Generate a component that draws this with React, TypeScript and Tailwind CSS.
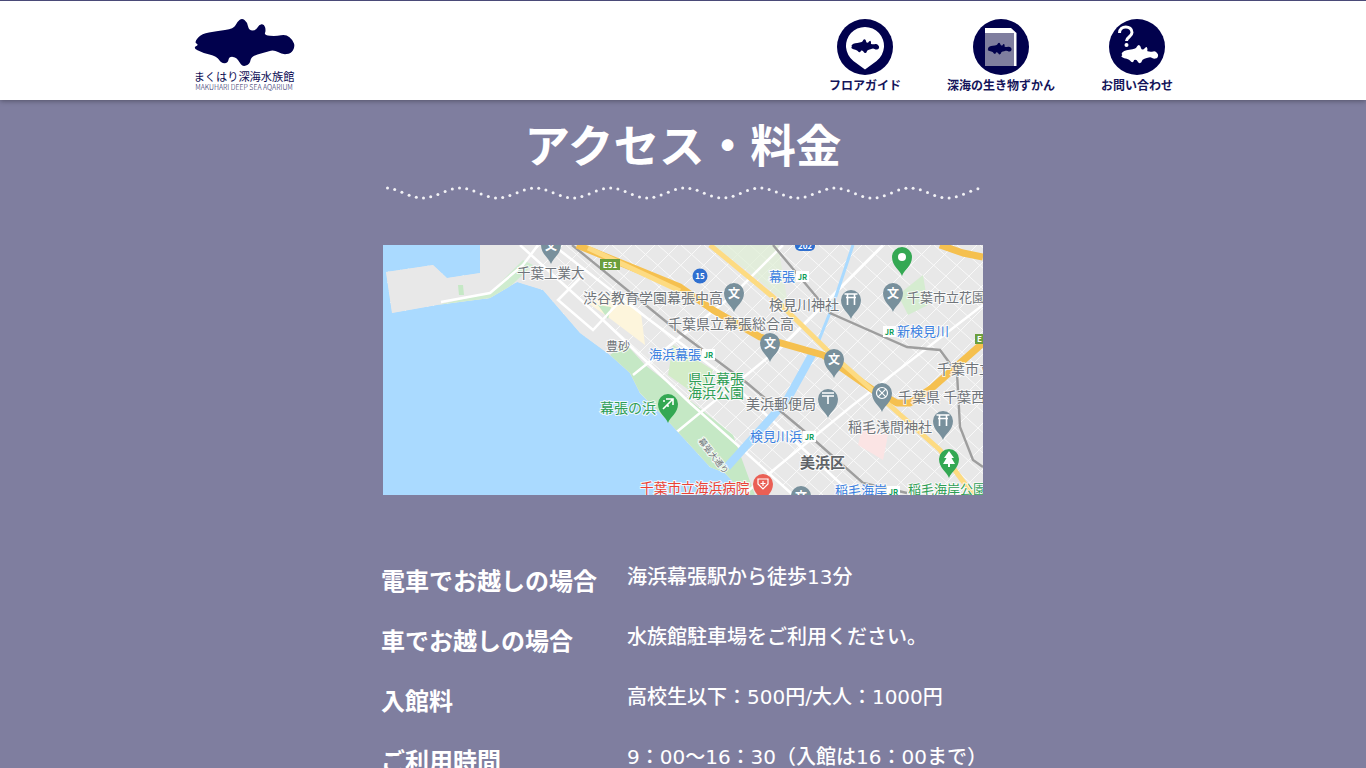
import React from "react";

type Pt = [number, number];

// closed smooth outline through midpoints
const smooth = (pts: Pt[]) => {
  const mid = (a: Pt, b: Pt): Pt => [(a[0] + b[0]) / 2, (a[1] + b[1]) / 2];
  const start = mid(pts[pts.length - 1], pts[0]);
  let d = `M${start[0]} ${start[1]}`;
  pts.forEach((p, i) => {
    const m = mid(p, pts[(i + 1) % pts.length]);
    d += ` Q${p[0]} ${p[1]} ${m[0]} ${m[1]}`;
  });
  return d + "Z";
};

const fish: Pt[] = [
  [0, 27], [8, 18], [22, 16], [40, 13], [43, 6], [48, 2], [53, 6], [55, 15], [62, 15], [65, 9], [70, 8], [72, 15], [70, 20],
  [82, 21], [92, 19], [99, 25], [101, 32], [97, 39], [88, 40], [80, 35], [70, 38], [57, 42], [56, 50], [48, 53], [43, 43],
  [35, 42], [34, 49], [27, 49], [23, 42], [8, 38], [-1, 33], [5, 30],
];
const fishPath = smooth(fish);

const NAVY = "#01014d";
const BG = "#7f7e9f";

const Logo = () => (
  <div className="flex w-[102px] flex-col items-center ml-[32px] pt-[16px]">
    <svg viewBox="-1 1 102 53" preserveAspectRatio="none" className="h-[51px] w-[102px]">
      <path d={fishPath} fill={NAVY} />
    </svg>
    <span className="mt-[1px] whitespace-nowrap text-[11.2px] leading-[14px] text-[#0d0d55]">まくはり深海水族館</span>
    <span className="whitespace-nowrap text-[7px] font-light leading-[8px] text-[#22225f]">MAKUHARI DEEP SEA AQARIUM</span>
  </div>
);

const FloorIcon = () => (
  <svg viewBox="0 0 56 56" className="h-14 w-14">
    <circle cx="28" cy="28" r="28" fill={NAVY} />
    <path d="M28 50.5 L16.4 42 A19 19 0 1 1 39.6 42 Z" fill="#fff" />
    <g transform="translate(14 19.5) scale(.28)">
      <path d={fishPath} fill={NAVY} />
    </g>
  </svg>
);

const BookIcon = () => (
  <svg viewBox="0 0 56 56" className="h-14 w-14">
    <circle cx="28" cy="28" r="28" fill={NAVY} />
    <path d="M12 9 H38 L43.5 14 V47 H12 Z" fill="#fff" />
    <rect x="12" y="14" width="29" height="33" fill={BG} />
    <g transform="translate(14.5 23) scale(.24)">
      <path d={fishPath} fill={NAVY} />
    </g>
  </svg>
);

const ContactIcon = () => (
  <svg viewBox="0 0 56 56" className="h-14 w-14">
    <circle cx="28" cy="28" r="28" fill={NAVY} />
    <path d="M10.5 14 C10.5 6 23 6 23 13.5 C23 18 17.5 18 17.5 22" fill="none" stroke="#fff" strokeWidth="3" />
    <circle cx="17.5" cy="26" r="2" fill="#fff" />
    <g transform="translate(12 25) scale(.37)">
      <path d={fishPath} fill="#fff" />
    </g>
  </svg>
);

const NavItem = ({ icon, label }: { icon: React.ReactNode; label: string }) => (
  <a className="flex w-[136px] flex-col items-center pt-[18px]">
    {icon}
    <span className="mt-[1px] whitespace-nowrap text-[12px] font-bold leading-[18px] text-[#14145a]">{label}</span>
  </a>
);

const Header = () => (
  <header className="relative z-10 h-[100px] border-t border-[#4a4a78] bg-white shadow-[0_1px_5px_rgba(0,0,0,0.35)]">
    <div className="mx-auto flex h-full w-[1044px] justify-between">
      <Logo />
      <nav className="flex">
        <NavItem icon={<FloorIcon />} label="フロアガイド" />
        <NavItem icon={<BookIcon />} label="深海の生き物ずかん" />
        <NavItem icon={<ContactIcon />} label="お問い合わせ" />
      </nav>
    </div>
  </header>
);

const Wave = () => {
  const dots: Pt[] = [];
  for (let x = 4.5; x <= 598; x += 7.2) {
    dots.push([x, 7 - 5 * Math.cos(((x - 77) / 75) * Math.PI * 2)]);
  }
  return (
    <svg viewBox="0 0 600 14" className="block h-[14px] w-[600px]">
      {dots.map(([x, y], i) => (
        <circle key={i} cx={x} cy={y} r="1.5" fill="#fff" opacity=".9" />
      ))}
    </svg>
  );
};

const LAND: Pt[] = [
  [97, 0], [97, 28], [64, 33], [50, 20], [3, 27], [9, 68], [54, 60], [107, 53], [134, 37], [160, 45], [197, 88], [227, 110],
  [247, 128], [257, 148], [284, 175], [327, 222], [342, 228], [362, 250], [600, 250], [600, 0],
];
// area towards the shore and the pier: big plots, no street grid
const SHORE: Pt[] = [
  [97, 0], [97, 28], [64, 33], [50, 20], [3, 27], [9, 68], [54, 60], [107, 53], [134, 37], [160, 45], [197, 88], [227, 110],
  [247, 128], [257, 148], [284, 175], [327, 222], [342, 228], [362, 250], [410, 250], [307, 158], [220, 75], [137, 0],
];
const line = (pts: Pt[]) => pts.map((p) => p.join(",")).join(" ");

const GREY_PIN = "#78909c";

const Pin = ({ x, y, color = GREY_PIN, glyph }: { x: number; y: number; color?: string; glyph?: React.ReactNode }) => (
  <g transform={`translate(${x} ${y})`}>
    <path d="M0 0 C-2 -6 -10 -10 -10 -19 A10 10 0 1 1 10 -19 C10 -10 2 -6 0 0Z" fill={color} />
    {glyph}
  </g>
);

const Bun = (
  <text x="0" y="-14.5" textAnchor="middle" fontSize="12" fontWeight="700" fill="#fff">
    文
  </text>
);
const Torii = (
  <path d="M-6.5 -25 H6.5 M-5 -21.5 H5 M-3.5 -25 V-14 M3.5 -25 V-14" stroke="#fff" strokeWidth="1.6" fill="none" />
);
const Post = <path d="M-6 -25 H6 M-6 -22 H6 M0 -22 V-14" stroke="#fff" strokeWidth="1.6" fill="none" />;

const Label = ({
  x,
  y,
  t,
  color = "#70757a",
  size = 14,
  weight = 400,
}: {
  x: number;
  y: number;
  t: string;
  color?: string;
  size?: number;
  weight?: number;
}) => (
  <text x={x} y={y} fill={color} fontSize={size} fontWeight={weight} stroke="#fff" strokeOpacity=".8" strokeWidth="2" paintOrder="stroke">
    {t}
  </text>
);

const Jr = ({ x, y }: { x: number; y: number }) => (
  <g transform={`translate(${x} ${y})`}>
    <rect width="13" height="11" fill="#fff" />
    <text x="6.5" y="8.5" textAnchor="middle" fontSize="7.5" fontWeight="700" fill="#0f9d58">
      JR
    </text>
  </g>
);

const Map = () => {
  const streets: React.ReactNode[] = [];
  for (let i = -300; i < 700; i += 23) {
    streets.push(<line key={`a${i}`} x1={i} y1={0} x2={i + 280} y2={250} />);
    streets.push(<line key={`b${i}`} x1={i + 250} y1={0} x2={i} y2={250} />);
  }
  return (
    <svg viewBox="0 0 600 250" className="block h-[250px] w-[600px]">
      <defs>
        <clipPath id="land">
          <polygon points={line(LAND)} />
        </clipPath>
      </defs>
      <rect width="600" height="250" fill="#aadaff" />
      <polygon points={line(LAND)} fill="#e8e8e8" />
      <g clipPath="url(#land)">
        <g stroke="#fff" strokeWidth="1" opacity=".75">{streets}</g>
        <polygon points={line(SHORE)} fill="#e8e8e8" />
        {/* parks and built-up patches */}
        <polygon points={line([[227, 110], [242, 98], [262, 120], [300, 150], [350, 190], [372, 250], [340, 250], [280, 180], [250, 140]])} fill="#c5e8c5" />
        <polygon points={line([[290, 100], [330, 125], [320, 155], [285, 130]])} fill="#d3ecc8" />
        <polygon points={line([[54, 60], [107, 48], [140, 15], [150, 20], [115, 53]])} fill="#cfeccf" />
        <polygon points={line([[75, 40], [80, 40], [81, 50], [76, 50]])} fill="#c5e8c5" />
        <polygon points={line([[205, 58], [225, 72], [262, 100], [258, 68], [232, 48]])} fill="#fdf5dc" />
        <polygon points={line([[215, 60], [228, 62], [225, 74]])} fill="#c5e8c5" />
        <polygon points={line([[330, 0], [395, 0], [405, 60], [370, 30]])} fill="#dff0d6" opacity=".7" />
        <polygon points={line([[480, 180], [505, 190], [500, 215], [475, 200]])} fill="#fbe4e4" />
        <polygon points={line([[515, 50], [540, 30], [545, 60], [525, 70]])} fill="#d5ecd0" />
        {/* main roads */}
        <g fill="none" stroke="#fff" strokeWidth="2.5">
          <polyline points={line([[137, 0], [220, 75], [307, 158], [360, 205], [410, 250]])} />
          <polyline points={line([[170, 0], [260, 70], [340, 130], [470, 250]])} />
          <polyline points={line([[58, 57], [107, 48], [140, 20], [155, 0]])} />
          <polyline points={line([[200, 30], [175, 55], [210, 85], [238, 55]])} />
          <polyline points={line([[250, 130], [350, 50], [400, 0]])} />
          <polyline points={line([[290, 190], [400, 100], [470, 30], [500, 0]])} />
          <polyline points={line([[360, 250], [470, 160], [600, 60]])} />
        </g>
        {/* river */}
        <polyline points={line([[470, 0], [450, 60], [436, 95]])} fill="none" stroke="#aadaff" strokeWidth="3" />
        <polyline points={line([[430, 108], [404, 155], [344, 222]])} fill="none" stroke="#aadaff" strokeWidth="8" />
        {/* rail */}
        <g fill="none" stroke="#9e9e9e" strokeWidth="2.4">
          <polyline points={line([[189, 0], [297, 88], [364, 138], [420, 185], [480, 238], [524, 248]])} />
          <polyline points={line([[390, 0], [447, 68], [524, 102], [557, 105], [574, 128], [577, 182], [590, 215], [600, 222]])} />
        </g>
        {/* highways */}
        <g fill="none" stroke="#f5c04f" strokeWidth="7" strokeLinejoin="round">
          <polyline points={line([[194, 0], [297, 42], [330, 65], [377, 92], [440, 110], [490, 145], [514, 158], [527, 158], [550, 142], [600, 98]])} />
          <polyline points={line([[557, 0], [580, 8], [600, 12]])} />
        </g>
        <g fill="none" stroke="#fddb82" strokeWidth="5" strokeLinejoin="round">
          <polyline points={line([[327, 0], [390, 52], [444, 105], [504, 158], [557, 205], [590, 250]])} />
          <polyline points={line([[205, 3], [297, 46]])} />
        </g>
      </g>
      <g fontFamily="'Noto Sans CJK JP', sans-serif">
        <Label x={134} y={33} t="千葉工業大" size={13.5} />
        <Label x={200} y={58} t="渋谷教育学園幕張中高" />
        <Label x={285} y={84} t="千葉県立幕張総合高" />
        <Label x={223} y={106} t="豊砂" size={12} />
        <Label x={266} y={114} t="海浜幕張" size={13} color="#3a7fe0" />
        <Label x={386} y={36} t="幕張" size={13} color="#3a7fe0" />
        <Label x={386} y={65} t="検見川神社" />
        <Label x={524} y={57} t="千葉市立花園" size={13} />
        <Label x={514} y={91} t="新検見川" size={13} color="#3a7fe0" />
        <Label x={554} y={129} t="千葉市立" />
        <Label x={515} y={157} t="千葉県 千葉西" size={14} />
        <Label x={305} y={139} t="県立幕張" color="#2f9e55" />
        <Label x={305} y={153} t="海浜公園" color="#2f9e55" />
        <Label x={363} y={164} t="美浜郵便局" />
        <Label x={217} y={168} t="幕張の浜" color="#2f9e55" />
        <Label x={367} y={196} t="検見川浜" size={13} color="#3a7fe0" />
        <Label x={465} y={187} t="稲毛浅間神社" />
        <Label x={417} y={223} t="美浜区" size={15} weight={700} color="#5f6368" />
        <Label x={257} y={248} t="千葉市立海浜病院" size={13.7} color="#ea4335" />
        <Label x={452} y={250} t="稲毛海岸" size={13} color="#3a7fe0" />
        <Label x={525} y={249} t="稲毛海岸公園" size={13} color="#2f9e55" />
        <g transform="translate(315 196) rotate(52)">
          <Label x={0} y={0} t="幕張大通り" size={8.5} />
        </g>
        <Jr x={319} y={104} />
        <Jr x={413} y={26} />
        <Jr x={500} y={81} />
        <Jr x={420} y={186} />
        <Jr x={504} y={241} />
        {/* road shields */}
        <rect x="217" y="14" width="20" height="11" fill="#6b9e3d" />
        <text x="227" y="23" textAnchor="middle" fontSize="8" fontWeight="700" fill="#fff">E51</text>
        <rect x="592" y="89" width="10" height="10" fill="#6b9e3d" />
        <text x="594" y="97" fontSize="8" fontWeight="700" fill="#fff">E</text>
        <circle cx="317" cy="31" r="7.5" fill="#2f6fd0" />
        <text x="317" y="34" textAnchor="middle" fontSize="8" fontWeight="700" fill="#fff">15</text>
        <rect x="412" y="-5" width="20" height="11" rx="5" fill="#2f6fd0" />
        <text x="422" y="4" textAnchor="middle" fontSize="8" fontWeight="700" fill="#fff">202</text>
        <Pin x={168} y={19} glyph={Bun} />
        <Pin x={351} y={67} glyph={Bun} />
        <Pin x={468} y={74} glyph={Torii} />
        <Pin x={510} y={67} glyph={Bun} />
        <Pin x={387} y={117} glyph={Bun} />
        <Pin x={451} y={133} glyph={Bun} />
        <Pin
          x={499}
          y={167}
          glyph={
            <g fill="none" stroke="#fff" strokeWidth="1.2">
              <circle cy="-19" r="5.5" />
              <path d="M-3.8 -22.8 L3.8 -15.2 M3.8 -22.8 L-3.8 -15.2" />
            </g>
          }
        />
        <Pin x={445} y={173} glyph={Post} />
        <Pin x={560} y={195} glyph={Torii} />
        <Pin x={519} y={31} color="#34a853" glyph={<circle cy="-19" r="4" fill="#fff" />} />
        <Pin
          x={285}
          y={178}
          color="#34a853"
          glyph={<path d="M-5 -14 L5 -24 M-2 -24 L5 -24 L5 -18 M-5 -22 h2 M-1 -17 h2" stroke="#fff" strokeWidth="1.6" fill="none" />}
        />
        <Pin x={566} y={233} color="#34a853" glyph={<path d="M0 -27 L5 -20 H2.5 L6 -14 H1 V-11 H-1 V-14 H-6 L-2.5 -20 H-5 Z" fill="#fff" />} />
        <Pin x={380} y={258} color="#ea5f55" glyph={<path d="M-5 -24 H5 V-19 L0 -14 L-5 -19 Z M0 -22 V-17 M-2.5 -19.5 H2.5" stroke="#fff" strokeWidth="1.2" fill="none" />} />
        <Pin x={418} y={270} glyph={Bun} />
      </g>
    </svg>
  );
};

const rows = [
  ["電車でお越しの場合", "海浜幕張駅から徒歩13分"],
  ["車でお越しの場合", "水族館駐車場をご利用ください。"],
  ["入館料", "高校生以下：500円/大人：1000円"],
  ["ご利用時間", "9：00〜16：30（入館は16：00まで）"],
];

export default function App() {
  return (
    <div className="h-screen overflow-hidden bg-[#7f7e9f] font-['Noto_Sans_CJK_JP',sans-serif] text-white">
      <Header />
      <main className="mx-auto w-[600px]">
        <h1 className="mt-[11px] text-center text-[45.6px] font-bold leading-[64px] whitespace-nowrap">アクセス・料金</h1>
        <div className="mt-[11px]">
          <Wave />
        </div>
        <div className="mt-[45px]">
          <Map />
        </div>
        <dl className="mt-[67px] -ml-[2px] flex flex-col gap-[24px]">
          {rows.map(([k, v]) => (
            <div key={k} className="grid grid-cols-[246px_1fr] h-[36px]">
              <dt className="text-[24px] font-bold leading-[36px] whitespace-nowrap">{k}</dt>
              <dd className="-mt-[3px] font-['DejaVu_Sans','Noto_Sans_CJK_JP',sans-serif] text-[20px] font-medium leading-[36px] whitespace-nowrap">{v}</dd>
            </div>
          ))}
        </dl>
      </main>
    </div>
  );
}
